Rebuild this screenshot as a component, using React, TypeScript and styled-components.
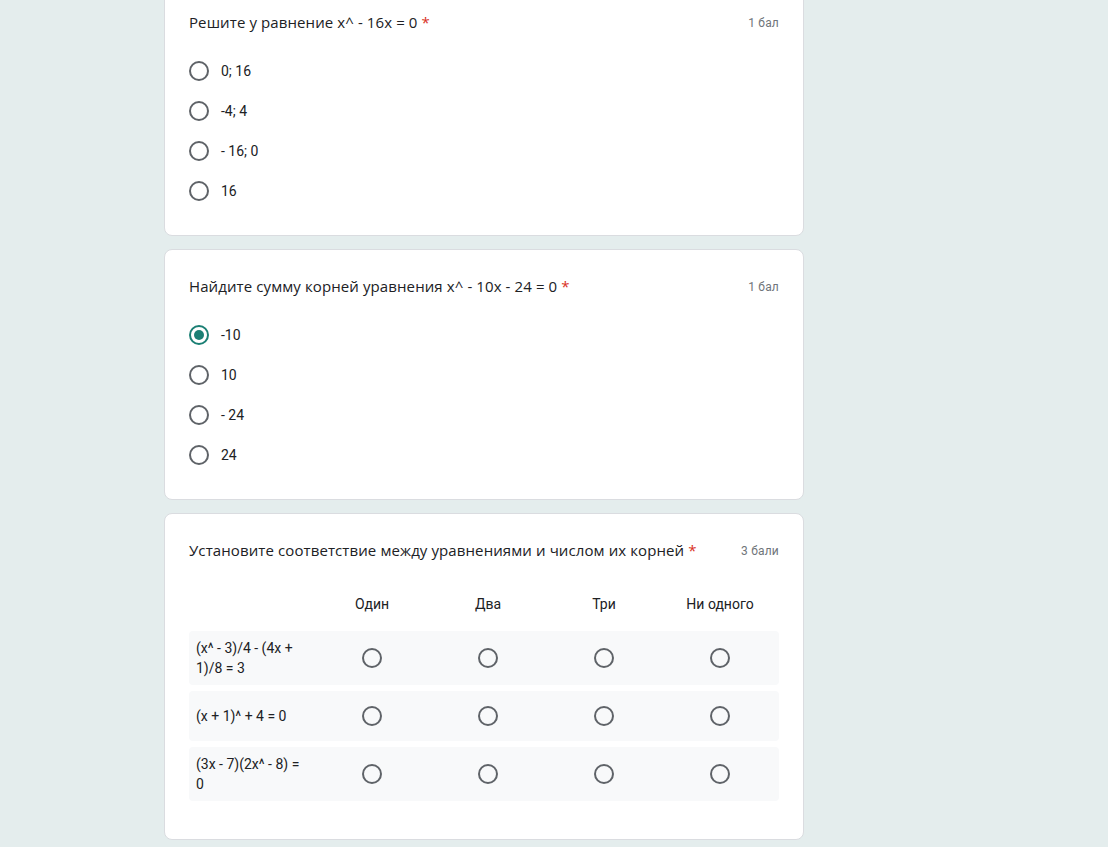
import React from 'react';
import styled, { createGlobalStyle } from 'styled-components';

const GlobalStyle = createGlobalStyle`
  html, body {
    margin: 0;
    padding: 0;
    background: #e4eded;
    overflow: hidden;
  }
  body {
    font-family: Roboto, "Liberation Sans", Arial, sans-serif;
    color: #202124;
  }
`;

const PageStyled = styled.div`
  width: 640px;
  margin: -15px 0 0 164px;
  display: flex;
  flex-direction: column;
  gap: 13px;
`;

const CardStyled = styled.div`
  background: #fff;
  border: 1px solid #dadce0;
  border-radius: 8px;
  padding: 24px;
`;

const CardHeadStyled = styled.div`
  display: flex;
  justify-content: space-between;
  align-items: center;
  min-height: 24px;
`;

const QuestionTitleStyled = styled.div`
  font-family: "Open Sans", Roboto, sans-serif;
  font-size: 15px;
  letter-spacing: 0.1px;
  line-height: 24px;
  color: #202124;
`;

const RequiredStyled = styled.span`
  color: #d93025;
  margin-left: 4px;
`;

const PointsStyled = styled.span`
  font-size: 12px;
  color: #70757a;
  letter-spacing: 0.2px;
  margin-top: 2px;
`;

const OptionsStyled = styled.div`
  display: flex;
  flex-direction: column;
  margin-top: 17px;
`;

const OptionRowStyled = styled.label`
  display: flex;
  align-items: center;
  gap: 12px;
  height: 40px;
  font-size: 14px;
  color: #202124;
`;

const RadioStyled = styled.span<{ $checked?: boolean }>`
  box-sizing: border-box;
  width: 20px;
  height: 20px;
  border-radius: 50%;
  border: 2px solid ${({ $checked }) => ($checked ? '#1b7f74' : '#5f6368')};
  display: flex;
  align-items: center;
  justify-content: center;
  flex-shrink: 0;
  &::after {
    content: '';
    display: ${({ $checked }) => ($checked ? 'block' : 'none')};
    width: 10px;
    height: 10px;
    border-radius: 50%;
    background: #1b7f74;
  }
`;

const GridStyled = styled.div`
  margin-top: 24px;
  margin-bottom: 14px;
  display: flex;
  flex-direction: column;
  gap: 6px;
`;

const GridRowStyled = styled.div<{ $head?: boolean }>`
  display: grid;
  grid-template-columns: 125px repeat(4, 116px);
  align-items: center;
  min-height: ${({ $head }) => ($head ? '36px' : '50px')};
  padding: ${({ $head }) => ($head ? '0' : '7px 0')};
  box-sizing: border-box;
  border-radius: 4px;
  background: ${({ $head }) => ($head ? 'transparent' : '#f8f9fa')};
  font-size: 14px;
  margin-bottom: ${({ $head }) => ($head ? '3px' : '0')};
`;

const RowLabelStyled = styled.div`
  padding: 0 8px 0 7px;
  line-height: 20px;
  font-size: 14px;
`;

const ColLabelStyled = styled.div`
  text-align: center;
  font-size: 14px;
`;

const CellStyled = styled.div`
  display: flex;
  justify-content: center;
`;

type Choice = { label: string; checked?: boolean };

const Question: React.FC<{ title: string; points: string; options: Choice[] }> = ({
  title,
  points,
  options,
}) => (
  <CardStyled>
    <CardHeadStyled>
      <QuestionTitleStyled>
        {title}
        <RequiredStyled>*</RequiredStyled>
      </QuestionTitleStyled>
      <PointsStyled>{points}</PointsStyled>
    </CardHeadStyled>
    <OptionsStyled>
      {options.map((o) => (
        <OptionRowStyled key={o.label}>
          <RadioStyled $checked={o.checked} />
          {o.label}
        </OptionRowStyled>
      ))}
    </OptionsStyled>
  </CardStyled>
);

const columns = ['Один', 'Два', 'Три', 'Ни одного'];
const rows = ['(x^ - 3)/4 - (4x + 1)/8 = 3', '(x + 1)^ + 4 = 0', '(3x - 7)(2x^ - 8) = 0'];

const App: React.FC = () => (
  <>
    <GlobalStyle />
    <PageStyled>
      <Question
        title="Решите у равнение x^ - 16x = 0"
        points="1 бал"
        options={[{ label: '0; 16' }, { label: '-4; 4' }, { label: '- 16; 0' }, { label: '16' }]}
      />
      <Question
        title="Найдите сумму корней уравнения x^ - 10x - 24 = 0"
        points="1 бал"
        options={[{ label: '-10', checked: true }, { label: '10' }, { label: '- 24' }, { label: '24' }]}
      />
      <CardStyled>
        <CardHeadStyled>
          <QuestionTitleStyled>
            Установите соответствие между уравнениями и числом их корней
            <RequiredStyled>*</RequiredStyled>
          </QuestionTitleStyled>
          <PointsStyled>3 бали</PointsStyled>
        </CardHeadStyled>
        <GridStyled>
          <GridRowStyled $head>
            <div />
            {columns.map((c) => (
              <ColLabelStyled key={c}>{c}</ColLabelStyled>
            ))}
          </GridRowStyled>
          {rows.map((r) => (
            <GridRowStyled key={r}>
              <RowLabelStyled>{r}</RowLabelStyled>
              {columns.map((c) => (
                <CellStyled key={c}>
                  <RadioStyled />
                </CellStyled>
              ))}
            </GridRowStyled>
          ))}
        </GridStyled>
      </CardStyled>
    </PageStyled>
  </>
);

export default App;
